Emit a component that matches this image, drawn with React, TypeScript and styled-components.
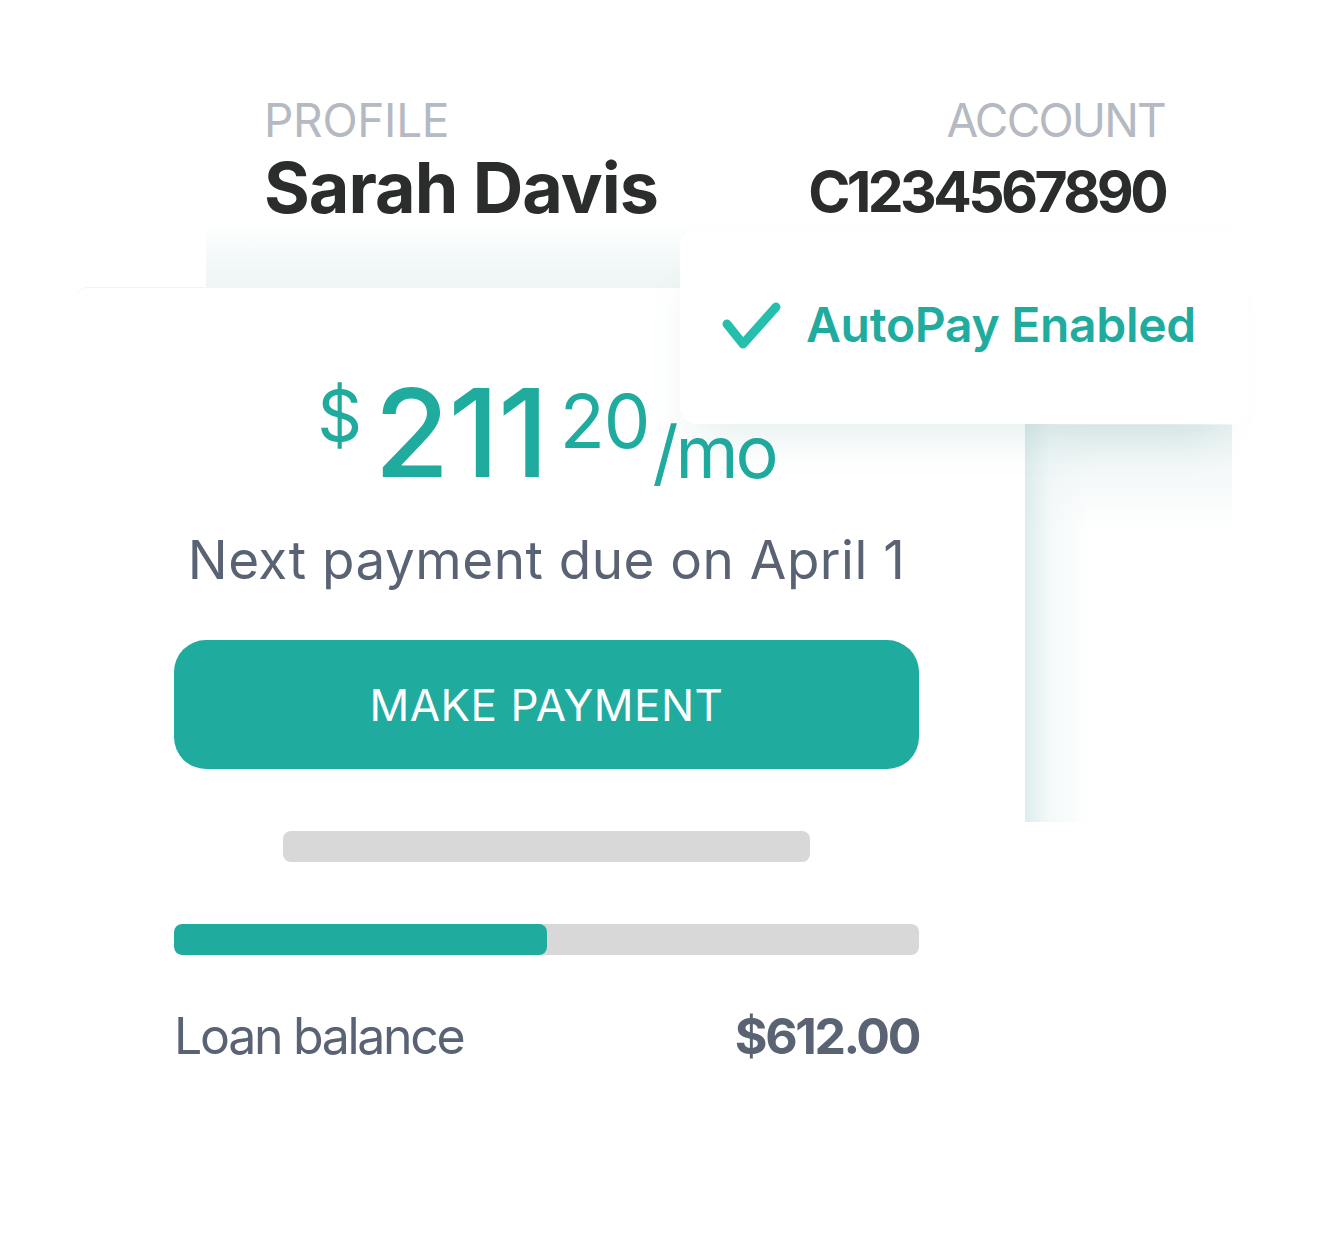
import React from 'react';
import styled, { createGlobalStyle } from 'styled-components';

const GlobalStyle = createGlobalStyle`
  html, body {
    margin: 0;
    padding: 0;
    background: #ffffff;
  }
  body {
    font-family: Inter, 'Noto Sans', 'Liberation Sans', sans-serif;
  }
`;

const TEAL = '#20ab9f';
const SLATE = '#5a6374';

// Cards overlap like stacked sheets, so they share one grid and sit on crossing cells.
const Stage = styled.div`
  display: grid;
  width: 1333px;
  height: 1248px;
  grid-template-columns: 73px 133px 474px 345px 207px 16px 1fr;
  grid-template-rows: 32px 198px 57px 137px 398px 338px 1fr;
`;

const HeaderCard = styled.div`
  grid-column: 3 / 6;
  grid-row: 2 / 4;
  z-index: 1;
  display: flex;
  justify-content: space-between;
  padding: 65px 67px 0 58px;
  border-radius: 0 16px 0 0;
  background: linear-gradient(
    to bottom,
    #ffffff 0,
    #ffffff 190px,
    #f4f9f9 225px,
    #eef5f5 255px
  );
`;

const Field = styled.div<{ $align?: 'left' | 'right' }>`
  display: flex;
  flex-direction: column;
  align-items: ${(p) => (p.$align === 'right' ? 'flex-end' : 'flex-start')};
`;

const FieldLabel = styled.span<{ $track?: number }>`
  font-size: 46px;
  line-height: 1;
  color: #b5b9c1;
  font-weight: 400;
  letter-spacing: ${(p) => p.$track ?? -0.3}px;
`;

const FieldValue = styled.span<{ $size: number; $gap: number; $track: number }>`
  margin-top: ${(p) => p.$gap}px;
  font-size: ${(p) => p.$size}px;
  line-height: 1;
  font-weight: 700;
  color: #2b2c2c;
  letter-spacing: ${(p) => p.$track}px;
`;

const SideCard = styled.div`
  grid-column: 5 / 6;
  grid-row: 4 / 6;
  z-index: 1;
  border-radius: 0 0 16px 0;
  background:
    linear-gradient(to right, rgba(216, 233, 234, 0.85) 0, rgba(236, 244, 245, 0.55) 25px, rgba(255, 255, 255, 0) 65px),
    linear-gradient(to bottom, #ffffff 0, #ffffff 137px, #e7f0f0 138px, #f3f8f8 180px, #fcfdfd 225px, #ffffff 245px);
`;

const MainCard = styled.div`
  grid-column: 2 / 5;
  grid-row: 4 / 7;
  z-index: 2;
  display: flex;
  flex-direction: column;
  align-items: stretch;
  padding: 84px 106px 0 101px;
  background: #ffffff;
  border-radius: 16px 0 16px 16px;
  border-top: 1px solid #eef5f5;
`;

const AutoPayCard = styled.div`
  grid-column: 4 / 7;
  grid-row: 3 / 5;
  z-index: 3;
  display: flex;
  align-items: center;
  gap: 24px;
  padding: 0 0 4px 42px;
  background: #ffffff;
  border-radius: 16px;
  box-shadow: -10px 34px 44px -26px rgba(40, 120, 120, 0.14);
`;

const AutoPayText = styled.span`
  font-size: 48px;
  line-height: 1;
  font-weight: 600;
  color: ${TEAL};
  letter-spacing: -0.3px;
`;

const Price = styled.div`
  display: flex;
  justify-content: center;
  align-items: flex-start;
  height: 122px;
  color: ${TEAL};
  padding-left: 0;
`;

const PricePart = styled.span<{ $size: number; $top: number; $weight?: number; $gap?: number; $track?: number }>`
  margin-top: ${(p) => p.$top}px;
  margin-right: ${(p) => p.$gap ?? 0}px;
  font-size: ${(p) => p.$size}px;
  font-weight: ${(p) => p.$weight ?? 400};
  letter-spacing: ${(p) => p.$track ?? 0}px;
  line-height: 1;
`;

const DueText = styled.p`
  margin: 40px 0 0;
  text-align: center;
  font-size: 53px;
  line-height: 1;
  color: ${SLATE};
  letter-spacing: 0.5px;
`;

const PayButton = styled.button`
  margin-top: 53px;
  height: 129px;
  border: 0;
  border-radius: 32px;
  background: ${TEAL};
  color: #ffffff;
  font-family: inherit;
  font-size: 44px;
  font-weight: 400;
  letter-spacing: 0.5px;
  cursor: pointer;
`;

const Bar = styled.div<{ $width?: number; $gap: number }>`
  align-self: center;
  width: ${(p) => (p.$width ? `${p.$width}px` : '100%')};
  height: 31px;
  margin-top: ${(p) => p.$gap}px;
  border-radius: 8px;
  background: #d8d8d8;
  overflow: hidden;
`;

const Fill = styled.div`
  height: 100%;
  background: ${TEAL};
  border-radius: 8px;
`;

const BalanceRow = styled.div`
  display: flex;
  justify-content: space-between;
  align-items: baseline;
  margin-top: 56px;
  font-size: 50px;
  line-height: 1;
  color: ${SLATE};
`;

const BalanceLabel = styled.span`
  letter-spacing: -2.3px;
`;

const BalanceValue = styled.span`
  font-weight: 700;
  letter-spacing: -2.4px;
`;

const CheckIcon = () => (
  <svg width="60" height="50" viewBox="0 0 60 50" fill="none">
    <path
      d="M5 24 L21 44 L54 7"
      stroke="#26bfae"
      strokeWidth="9"
      strokeLinecap="round"
      strokeLinejoin="round"
    />
  </svg>
);

const loan = { balance: '$612.00', paidShare: 0.5 };

const App = () => (
  <>
    <GlobalStyle />
    <Stage>
      <HeaderCard>
        <Field>
          <FieldLabel>PROFILE</FieldLabel>
          <FieldValue $size={70} $gap={10} $track={-1}>
            Sarah Davis
          </FieldValue>
        </Field>
        <Field $align="right">
          <FieldLabel $track={-1.8}>ACCOUNT</FieldLabel>
          <FieldValue $size={57} $gap={20} $track={-3.6}>
            C1234567890
          </FieldValue>
        </Field>
      </HeaderCard>

      <SideCard />

      <MainCard>
        <Price>
          <PricePart $size={70} $top={9} $gap={12}>
            $
          </PricePart>
          <PricePart $size={122} $top={0} $weight={500} $gap={12} $track={-1}>
            211
          </PricePart>
          <PricePart $size={74} $top={12} $gap={3} $track={-1}>
            20
          </PricePart>
          <PricePart $size={72} $top={44} $track={-3}>
            /mo
          </PricePart>
        </Price>
        <DueText>Next payment due on April 1</DueText>
        <PayButton>MAKE PAYMENT</PayButton>
        <Bar $width={527} $gap={62} />
        <Bar $gap={62}>
          <Fill style={{ width: `${loan.paidShare * 100}%` }} />
        </Bar>
        <BalanceRow>
          <BalanceLabel>Loan balance</BalanceLabel>
          <BalanceValue>{loan.balance}</BalanceValue>
        </BalanceRow>
      </MainCard>

      <AutoPayCard>
        <CheckIcon />
        <AutoPayText>AutoPay Enabled</AutoPayText>
      </AutoPayCard>
    </Stage>
  </>
);

export default App;
